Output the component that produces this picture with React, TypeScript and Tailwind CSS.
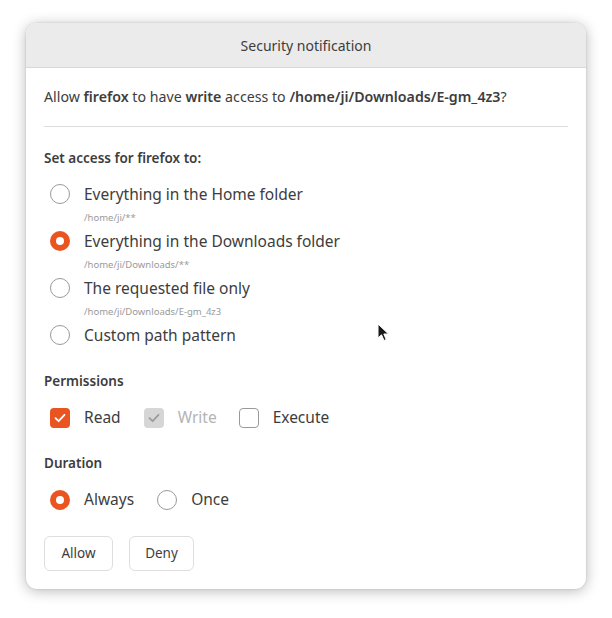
import React from "react";

function Radio({ checked }: { checked?: boolean }) {
  if (checked) {
    return (
      <span className="flex h-[20px] w-[20px] shrink-0 items-center justify-center rounded-full bg-[#e95420]">
        <span className="h-[8px] w-[8px] rounded-full bg-white" />
      </span>
    );
  }
  return (
    <span className="block h-[20px] w-[20px] shrink-0 rounded-full border border-[#9a9a9a] bg-white" />
  );
}

function Check({ state }: { state: "on" | "off" | "disabled" }) {
  if (state === "off") {
    return (
      <span className="block h-[20px] w-[20px] shrink-0 rounded-[4px] border border-[#9a9a9a] bg-white" />
    );
  }
  const bg = state === "on" ? "bg-[#e95420]" : "bg-[#d6d6d6]";
  const stroke = state === "on" ? "#ffffff" : "#9c9c9c";
  return (
    <span
      className={`flex h-[20px] w-[20px] shrink-0 items-center justify-center rounded-[4px] ${bg}`}
    >
      <svg width="14" height="14" viewBox="0 0 14 14">
        <path
          d="M2.5 7.2 L5.6 10.2 L11.5 3.8"
          fill="none"
          stroke={stroke}
          strokeWidth="1.8"
          strokeLinecap="round"
          strokeLinejoin="round"
        />
      </svg>
    </span>
  );
}

function RadioRow({
  label,
  hint,
  checked,
}: {
  label: string;
  hint?: string;
  checked?: boolean;
}) {
  return (
    <div>
      <div className="flex h-[24px] items-center">
        <span className="ml-[6px] mr-[14px] flex">
          <Radio checked={checked} />
        </span>
        <span className="text-[15.5px] text-[#3d3d3d]">{label}</span>
      </div>
      {hint && (
        <div className="flex h-[23px] items-center pl-[40px] text-[9.5px] text-[#9a9a9a]">
          {hint}
        </div>
      )}
    </div>
  );
}

export default function App() {
  return (
    <div
      className="relative h-[618px] w-[612px] bg-white"
      style={{ fontFamily: '"Noto Sans", "Open Sans", sans-serif' }}
    >
      <div className="absolute left-[26px] top-[23px] h-[566px] w-[560px] overflow-hidden rounded-[11px] bg-white shadow-[0_2px_14px_rgba(0,0,0,0.28),0_0_2px_rgba(0,0,0,0.15)]">
        <div className="flex h-[45px] items-center justify-center border-b border-[#d8d8d8] bg-[#ebebeb] text-[14px] text-[#3d3d3d]">
          Security notification
        </div>

        <div className="px-[18px]">
          <p className="flex h-[58px] items-center text-[14.2px] text-[#3d3d3d]">
            <span>
              Allow <b className="font-semibold">firefox</b> to have{" "}
              <b className="font-semibold">write</b> access to{" "}
              <b className="font-semibold">/home/ji/Downloads/E-gm_4z3</b>?
            </span>
          </p>
          <div className="h-px bg-[#dcdcdc]" />

          <div className="mt-[21px] text-[13.5px] font-semibold text-[#3d3d3d]">
            Set access for firefox to:
          </div>
          <div className="mt-[14px] flex flex-col">
            <RadioRow label="Everything in the Home folder" hint="/home/ji/**" />
            <RadioRow
              label="Everything in the Downloads folder"
              hint="/home/ji/Downloads/**"
              checked
            />
            <RadioRow
              label="The requested file only"
              hint="/home/ji/Downloads/E-gm_4z3"
            />
            <RadioRow label="Custom path pattern" />
          </div>

          <div className="mt-[24px] text-[13.5px] font-semibold text-[#3d3d3d]">
            Permissions
          </div>
          <div className="mt-[14px] flex h-[24px] items-center text-[15.5px]">
            <span className="ml-[6px] flex">
              <Check state="on" />
            </span>
            <span className="ml-[14px] text-[#3d3d3d]">Read</span>
            <span className="ml-[23px] flex">
              <Check state="disabled" />
            </span>
            <span className="ml-[14px] text-[#b4b4b4]">Write</span>
            <span className="ml-[22px] flex">
              <Check state="off" />
            </span>
            <span className="ml-[14px] text-[#3d3d3d]">Execute</span>
          </div>

          <div className="mt-[23px] text-[13.5px] font-semibold text-[#3d3d3d]">
            Duration
          </div>
          <div className="mt-[15px] flex h-[24px] items-center text-[15.5px] text-[#3d3d3d]">
            <span className="ml-[6px] mr-[14px] flex">
              <Radio checked />
            </span>
            <span>Always</span>
            <span className="ml-[23px] mr-[14px] flex">
              <Radio />
            </span>
            <span>Once</span>
          </div>

          <div className="mt-[24px] flex gap-[16px]">
            <button className="h-[35px] w-[69px] rounded-[6px] border border-[#dedede] bg-white text-[13.5px] text-[#3d3d3d]">
              Allow
            </button>
            <button className="h-[35px] w-[65px] rounded-[6px] border border-[#dedede] bg-white text-[13.5px] text-[#3d3d3d]">
              Deny
            </button>
          </div>
        </div>
      </div>

      <svg
        className="absolute left-[377px] top-[323px]"
        width="14"
        height="20"
        viewBox="0 0 14 20"
      >
        <path
          d="M1 1 L1 15 L4.5 11.8 L7 17.5 L9.2 16.5 L6.8 11 L11.5 11 Z"
          fill="#1a1a1a"
          stroke="#ffffff"
          strokeWidth="1"
          strokeLinejoin="round"
        />
      </svg>
    </div>
  );
}
